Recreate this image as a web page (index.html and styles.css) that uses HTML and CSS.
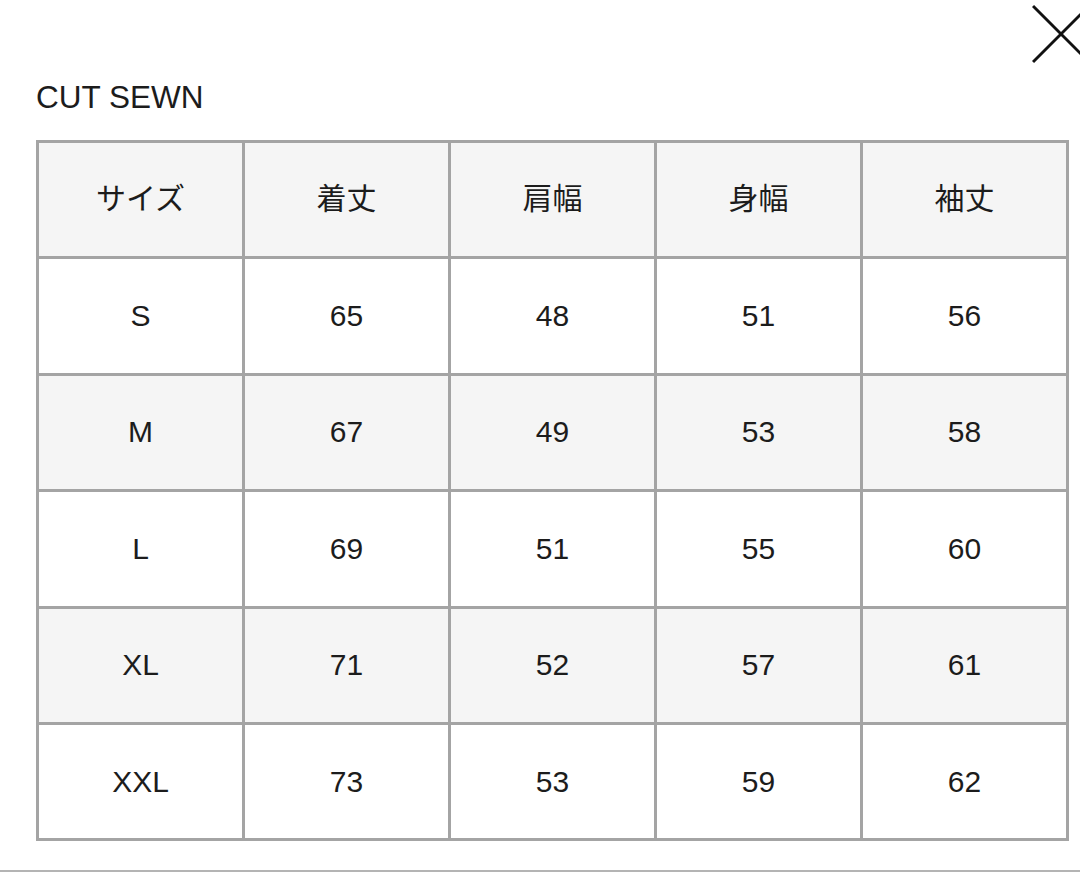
FILE: index.html
```html
<!DOCTYPE html>
<html lang="ja">
<head>
<meta charset="utf-8">
<title>CUT SEWN</title>
<link rel="stylesheet" href="styles.css">
</head>
<body>
<div class="modal">
  <button class="close" aria-label="閉じる">
    <svg width="60" height="66" viewBox="0 0 60 66"><path d="M1 6 L59 64 M1 62 L59 4" stroke="#111" stroke-width="3" fill="none"/></svg>
  </button>
  <div class="content">
    <h1 class="title">CUT SEWN</h1>
    <table class="size-table">
      <thead>
        <tr><th>サイズ</th><th>着丈</th><th>肩幅</th><th>身幅</th><th>袖丈</th></tr>
      </thead>
      <tbody>
        <tr><td>S</td><td>65</td><td>48</td><td>51</td><td>56</td></tr>
        <tr class="alt"><td>M</td><td>67</td><td>49</td><td>53</td><td>58</td></tr>
        <tr><td>L</td><td>69</td><td>51</td><td>55</td><td>60</td></tr>
        <tr class="alt"><td>XL</td><td>71</td><td>52</td><td>57</td><td>61</td></tr>
        <tr><td>XXL</td><td>73</td><td>53</td><td>59</td><td>62</td></tr>
      </tbody>
    </table>
  </div>
  <div class="rule"></div>
</div>
</body>
</html>
```

FILE: styles.css
```css
html, body {
  margin: 0;
  padding: 0;
  background: #fff;
}
body {
  font-family: "Liberation Sans", Arial, "Noto Sans CJK JP", sans-serif;
  color: #1c1c1c;
  overflow: hidden;
}
.modal {
  position: relative;
  width: 1080px;
  height: 873px;
}
.close {
  position: absolute;
  top: 0;
  right: -12px;
  width: 60px;
  height: 66px;
  padding: 0;
  border: 0;
  background: none;
  cursor: pointer;
}
.close svg {
  display: block;
}
.content {
  padding: 82px 11px 0 36px;
}
.title {
  margin: 0 0 28px 0;
  font-size: 31.5px;
  line-height: 30px;
  font-weight: normal;
  letter-spacing: 0;
}
.size-table {
  border-collapse: separate;
  border-spacing: 3px;
  background: #a4a4a4;
  width: 1033px;
  table-layout: fixed;
}
.size-table th,
.size-table td {
  height: 113.4px;
  padding: 0;
  text-align: center;
  vertical-align: middle;
  font-size: 30px;
  font-weight: normal;
  background: #fff;
}
.size-table th {
  background: #f5f5f5;
  padding-bottom: 8px;
  box-sizing: border-box;
}
.size-table tr.alt td {
  background: #f5f5f5;
}
.rule {
  position: absolute;
  left: 0;
  right: 0;
  bottom: 1px;
  height: 2px;
  background: #b4b4b4;
}
```
